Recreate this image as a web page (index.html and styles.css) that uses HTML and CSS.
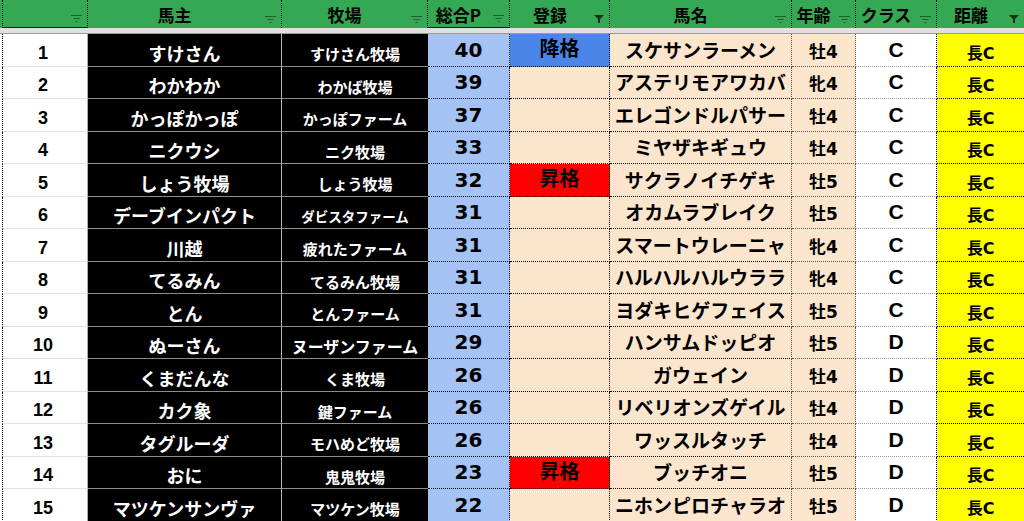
FILE: index.html
```html
<!DOCTYPE html>
<html lang="ja">
<head>
<meta charset="utf-8">
<title>馬主一覧</title>
<link rel="stylesheet" href="styles.css">
</head>
<body>
<div class="sheet">
  <div class="row head">
    <div class="h h-no"><span class="lbl"></span><svg class="fi" viewBox="0 0 11 7"><path d="M0 .5h11M2.5 3.5h6M4.5 6.5h2"/></svg></div>
    <div class="h"><span class="lbl">馬主</span><svg class="fi" viewBox="0 0 11 7"><path d="M0 .5h11M2.5 3.5h6M4.5 6.5h2"/></svg></div>
    <div class="h"><span class="lbl">牧場</span><svg class="fi" viewBox="0 0 11 7"><path d="M0 .5h11M2.5 3.5h6M4.5 6.5h2"/></svg></div>
    <div class="h h-pts"><span class="lbl">総合P</span><svg class="fi" viewBox="0 0 11 7"><path d="M0 .5h11M2.5 3.5h6M4.5 6.5h2"/></svg></div>
    <div class="h"><span class="lbl">登録</span><svg class="fa" viewBox="0 0 10 8"><path d="M0 0h10L6 4v4H4V4z"/></svg></div>
    <div class="h"><span class="lbl">馬名</span><svg class="fi" viewBox="0 0 11 7"><path d="M0 .5h11M2.5 3.5h6M4.5 6.5h2"/></svg></div>
    <div class="h"><span class="lbl">年齢</span><svg class="fi" viewBox="0 0 11 7"><path d="M0 .5h11M2.5 3.5h6M4.5 6.5h2"/></svg></div>
    <div class="h"><span class="lbl">クラス</span><svg class="fi" viewBox="0 0 11 7"><path d="M0 .5h11M2.5 3.5h6M4.5 6.5h2"/></svg></div>
    <div class="h h-last"><span class="lbl">距離</span><svg class="fa" viewBox="0 0 10 8"><path d="M0 0h10L6 4v4H4V4z"/></svg></div>
  </div>
  <div class="freeze"></div>

  <div class="row"><div class="c no">1</div><div class="c owner">すけさん</div><div class="c farm">すけさん牧場</div><div class="c pts">40</div><div class="c reg down">降格</div><div class="c name">スケサンラーメン</div><div class="c age">牡4</div><div class="c cls">C</div><div class="c dist">長C</div></div>
  <div class="row"><div class="c no">2</div><div class="c owner">わかわか</div><div class="c farm">わかば牧場</div><div class="c pts">39</div><div class="c reg"></div><div class="c name">アステリモアワカバ</div><div class="c age">牝4</div><div class="c cls">C</div><div class="c dist">長C</div></div>
  <div class="row"><div class="c no">3</div><div class="c owner">かっぽかっぽ</div><div class="c farm">かっぽファーム</div><div class="c pts">37</div><div class="c reg"></div><div class="c name">エレゴンドルパサー</div><div class="c age">牡4</div><div class="c cls">C</div><div class="c dist">長C</div></div>
  <div class="row"><div class="c no">4</div><div class="c owner">ニクウシ</div><div class="c farm">ニク牧場</div><div class="c pts">33</div><div class="c reg"></div><div class="c name">ミヤザキギュウ</div><div class="c age">牡4</div><div class="c cls">C</div><div class="c dist">長C</div></div>
  <div class="row"><div class="c no">5</div><div class="c owner">しょう牧場</div><div class="c farm">しょう牧場</div><div class="c pts">32</div><div class="c reg up">昇格</div><div class="c name">サクラノイチゲキ</div><div class="c age">牡5</div><div class="c cls">C</div><div class="c dist">長C</div></div>
  <div class="row"><div class="c no">6</div><div class="c owner">デーブインパクト</div><div class="c farm sm">ダビスタファーム</div><div class="c pts">31</div><div class="c reg"></div><div class="c name">オカムラブレイク</div><div class="c age">牡5</div><div class="c cls">C</div><div class="c dist">長C</div></div>
  <div class="row"><div class="c no">7</div><div class="c owner">川越</div><div class="c farm">疲れたファーム</div><div class="c pts">31</div><div class="c reg"></div><div class="c name">スマートウレーニャ</div><div class="c age">牝4</div><div class="c cls">C</div><div class="c dist">長C</div></div>
  <div class="row"><div class="c no">8</div><div class="c owner">てるみん</div><div class="c farm">てるみん牧場</div><div class="c pts">31</div><div class="c reg"></div><div class="c name">ハルハルハルウララ</div><div class="c age">牝4</div><div class="c cls">C</div><div class="c dist">長C</div></div>
  <div class="row"><div class="c no">9</div><div class="c owner">とん</div><div class="c farm">とんファーム</div><div class="c pts">31</div><div class="c reg"></div><div class="c name">ヨダキヒゲフェイス</div><div class="c age">牡5</div><div class="c cls">C</div><div class="c dist">長C</div></div>
  <div class="row"><div class="c no">10</div><div class="c owner">ぬーさん</div><div class="c farm lg">ヌーザンファーム</div><div class="c pts">29</div><div class="c reg"></div><div class="c name">ハンサムドッピオ</div><div class="c age">牡5</div><div class="c cls">D</div><div class="c dist">長C</div></div>
  <div class="row"><div class="c no">11</div><div class="c owner">くまだんな</div><div class="c farm">くま牧場</div><div class="c pts">26</div><div class="c reg"></div><div class="c name">ガウェイン</div><div class="c age">牡4</div><div class="c cls">D</div><div class="c dist">長C</div></div>
  <div class="row"><div class="c no">12</div><div class="c owner">カク象</div><div class="c farm">鍵ファーム</div><div class="c pts">26</div><div class="c reg"></div><div class="c name">リベリオンズゲイル</div><div class="c age">牡4</div><div class="c cls">D</div><div class="c dist">長C</div></div>
  <div class="row"><div class="c no">13</div><div class="c owner">タグルーダ</div><div class="c farm">モハめど牧場</div><div class="c pts">26</div><div class="c reg"></div><div class="c name">ワッスルタッチ</div><div class="c age">牡4</div><div class="c cls">D</div><div class="c dist">長C</div></div>
  <div class="row"><div class="c no">14</div><div class="c owner">おに</div><div class="c farm">鬼鬼牧場</div><div class="c pts">23</div><div class="c reg up">昇格</div><div class="c name">ブッチオニ</div><div class="c age">牡5</div><div class="c cls">D</div><div class="c dist">長C</div></div>
  <div class="row"><div class="c no">15</div><div class="c owner">マツケンサンヴァ</div><div class="c farm">マツケン牧場</div><div class="c pts">22</div><div class="c reg"></div><div class="c name">ニホンピロチャラオ</div><div class="c age">牡5</div><div class="c cls">D</div><div class="c dist">長C</div></div>
</div>
</body>
</html>
```
FILE: styles.css
```css
* { box-sizing: border-box; }
html, body { margin: 0; padding: 0; background: #fff; overflow: hidden; }
body {
  font-family: "Noto Sans CJK JP", "Noto Sans", sans-serif;
  font-weight: 700;
  color: #000;
}
.sheet { width: 1024px; padding-left: 2px; }
.row {
  display: grid;
  grid-template-columns: 86px 194px 146px 82px 100px 182px 64px 81px 87px;
  height: 32.5px;
}
.row.head { height: 28px; }

/* header */
.h {
  background: #35a853;
  display: flex;
  align-items: center;
  border-right: 1px dotted #000;
  font-size: 17px;
  line-height: 1;
  color: #000;
}
.h-no { border-left: 1px dotted #000; box-shadow: -2px 0 0 #35a853; border-bottom: 1px solid #1c1c1c; }
.h-pts { border-bottom: 1px solid #1c1c1c; }
.h-last { border-right: none; }
.lbl {
  flex: 1;
  min-width: 0;
  text-align: center;
  white-space: nowrap;
  padding-top: 1px;
}
.fi, .fa { flex: none; margin: 0 5px 0 4px; }
.fi { width: 11px; height: 7px; margin-top: 10px; }
.fi path { stroke: #275a36; stroke-width: 1.2; fill: none; }
.fa { width: 10px; height: 8px; margin-top: 10px; }
.fa path { fill: #15301c; }

.freeze {
  height: 6px;
  background: #e0e0e0;
  border-bottom: 1px solid #9a9a9a;
  margin-left: -2px;
}

/* cells */
.c {
  display: flex;
  align-items: center;
  justify-content: center;
  white-space: nowrap;
  line-height: 1;
  overflow: hidden;
}
.no {
  font-family: "Liberation Sans", Arial, sans-serif;
  font-size: 18px;
  background: #fff;
  border-left: 1px dotted #000;
  border-right: 1px solid #ababab;
  border-bottom: 1px solid #e2e2e2;
  padding-top: 6px;
  padding-right: 4px;
}
.owner {
  background: #000;
  color: #fff;
  font-size: 18px;
  border-right: 1px solid #b5b5b5;
  border-bottom: 1px solid #8c8c8c;
  padding-top: 6px;
}
.farm {
  background: #000;
  color: #fff;
  font-size: 15px;
  border-bottom: 1px solid #8c8c8c;
  padding-top: 8px;
}
.farm.sm { font-size: 13.5px; }
.farm.lg { font-size: 16px; }
.pts {
  background: #a4c2f4;
  font-family: "DejaVu Sans", Verdana, sans-serif;
  font-size: 20px;
  border-right: 1px dotted #000;
  border-bottom: 1px dotted #000;
}
.reg {
  background: #fce5cd;
  font-size: 20px;
  border-right: 1px dotted #000;
  border-bottom: 1px dotted #000;
  padding-bottom: 3px;
}
.reg.down { background: #4a86e8; }
.reg.up { background: #ff0000; }
.name {
  background: #fce5cd;
  font-size: 19px;
  border-right: 1px dotted #555;
  border-bottom: 1px dotted #000;
  padding-bottom: 1px;
}
.age {
  background: #fce5cd;
  font-family: "DejaVu Sans", "Noto Sans CJK JP", sans-serif;
  font-size: 17px;
  border-right: 1px dotted #555;
  border-bottom: 1px dotted #555;
  padding-top: 5px;
}
.cls {
  background: #fff;
  font-family: "Liberation Sans", Arial, sans-serif;
  font-size: 21px;
  border-right: 1px dotted #000;
  border-bottom: 1px dotted #9a9a9a;
  padding-bottom: 1px;
}
.dist {
  background: #ffff00;
  font-family: "DejaVu Sans", "Noto Sans CJK JP", sans-serif;
  font-size: 16px;
  border-bottom: 1px dotted #000;
  padding-top: 8px;
}
```
